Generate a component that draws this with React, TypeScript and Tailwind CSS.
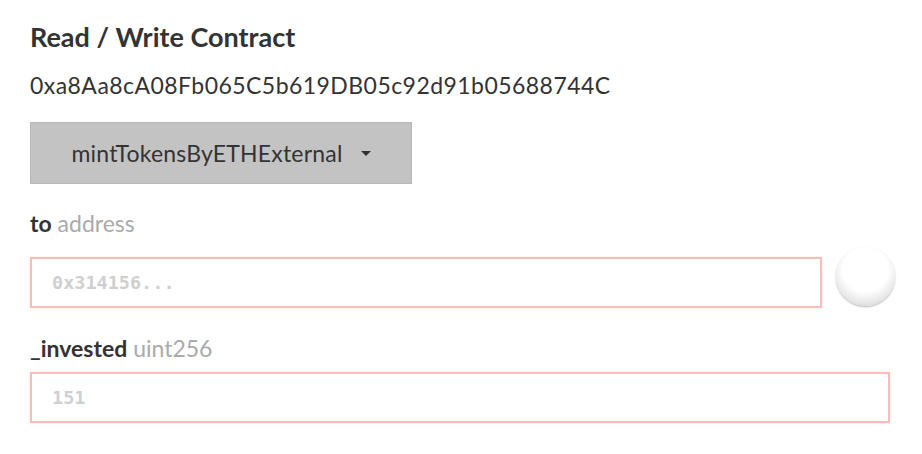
export default function App() {
  return (
    <div className="min-h-[454px] bg-white px-[30px] pt-[21px] font-['Lato',sans-serif] text-[#333]">
      <h2 className="text-[27px] font-bold leading-[32px]">Read / Write Contract</h2>
      <p className="mt-[18px] text-[23px] leading-[28px] tracking-[0.45px]">0xa8Aa8cA08Fb065C5b619DB05c92d91b05688744C</p>

      <button
        type="button"
        className="mt-[23px] flex h-[62px] w-[382px] items-center justify-center gap-[18px] border border-[#b8b8b8] bg-[#c3c3c3] text-[23px] leading-[28px] tracking-[0.2px] text-[#333]"
      >
        <span>mintTokensByETHExternal</span>
        <span className="h-0 w-0 border-x-[5px] border-t-[5px] border-x-transparent border-t-[#333]" />
      </button>

      <div className="mt-[25px] text-[23px] leading-[28px]">
        <span className="font-bold">to</span> <span className="text-[#aaa]">address</span>
      </div>
      <div className="mt-[20px] flex items-start gap-[14px]">
        <input
          placeholder="0x314156..."
          className="h-[51px] w-[792px] shrink-0 border-2 border-[#f9bcb6] px-[20px] font-['DejaVu_Sans_Mono',monospace] text-[18.5px] font-bold outline-none placeholder:text-[#cfcfcf] shadow-[0_0_2px_#fde0dd]"
        />
        <div className="-mt-[10px] h-[59px] w-[59px] shrink-0 rounded-full bg-[radial-gradient(circle_at_50%_38%,#ffffff_0%,#ffffff_48%,#e6e6e6_72%,#b8b8b8_100%)] shadow-[0_1px_2px_rgba(0,0,0,0.3)]" />
      </div>

      <div className="mt-[26px] text-[23px] leading-[28px]">
        <span className="font-bold">_invested</span> <span className="text-[#aaa]">uint256</span>
      </div>
      <input
        placeholder="151"
        className="mt-[10px] block h-[51px] w-[860px] border-2 border-[#f9bcb6] px-[20px] font-['DejaVu_Sans_Mono',monospace] text-[18.5px] font-bold outline-none placeholder:text-[#cfcfcf] shadow-[0_0_2px_#fde0dd]"
      />
    </div>
  );
}
